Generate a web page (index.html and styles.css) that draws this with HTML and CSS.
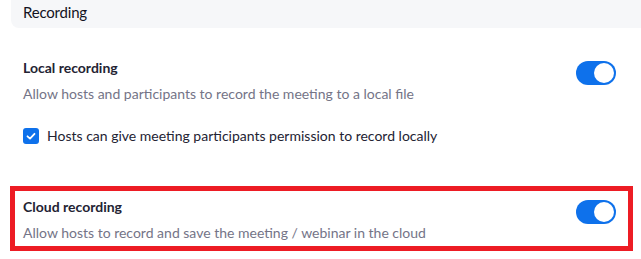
FILE: index.html
```html
<!DOCTYPE html>
<html>
<head>
<meta charset="utf-8">
<link rel="stylesheet" href="styles.css">
</head>
<body>
  <div class="section-head">Recording</div>
  <div class="setting local">
    <div class="setting-text">
      <div class="title">Local recording</div>
      <div class="desc">Allow hosts and participants to record the meeting to a local file</div>
      <label class="check">
        <span class="box">
          <svg width="16" height="16" viewBox="0 0 16 16"><path d="M4.5 8.3 L7 10.6 L11.5 5.8" fill="none" stroke="#fff" stroke-width="1.8" stroke-linecap="round" stroke-linejoin="round"/></svg>
        </span>
        <span>Hosts can give meeting participants permission to record locally</span>
      </label>
    </div>
    <span class="toggle"><span class="knob"></span></span>
  </div>
  <div class="setting cloud">
    <div class="setting-text">
      <div class="title">Cloud recording</div>
      <div class="desc">Allow hosts to record and save the meeting / webinar in the cloud</div>
    </div>
    <span class="toggle"><span class="knob"></span></span>
  </div>
</body>
</html>
```

FILE: styles.css
```css
* { box-sizing: border-box; }
body {
  margin: 0;
  background: #fff;
  font-family: Lato, "Open Sans", sans-serif;
  color: #232333;
  width: 641px;
  height: 259px;
  overflow: hidden;
}
.section-head {
  margin-left: 11px;
  height: 28px;
  background: #f6f7f9;
  border-bottom-left-radius: 8px;
  padding: 2px 0 0 12px;
  font-size: 15px;
  line-height: 20px;
  color: #131322;
  letter-spacing: -0.2px;
}
.setting {
  display: flex;
  justify-content: space-between;
  align-items: flex-start;
}
.local {
  padding: 30px 25px 0 23px;
}
.title {
  font-weight: bold;
  font-size: 14px;
  line-height: 20px;
}
.desc {
  margin-top: 6px;
  font-size: 14px;
  line-height: 20px;
  color: #747487;
}
.check {
  display: flex;
  align-items: center;
  gap: 8px;
  margin-top: 22px;
  font-size: 14px;
  line-height: 20px;
}
.box {
  width: 16px;
  height: 16px;
  border-radius: 3px;
  background: #0e71eb;
  display: flex;
}
.toggle {
  width: 40px;
  height: 24px;
  border-radius: 12px;
  background: #0e71eb;
  display: flex;
  justify-content: flex-end;
  align-items: center;
  padding-right: 2px;
  margin-top: 3px;
  flex: none;
}
.knob {
  width: 20px;
  height: 20px;
  border-radius: 50%;
  background: #fff;
}
.cloud {
  margin: 40px 0 0 10px;
  width: 623px;
  height: 65px;
  border: 5px solid #ed1c24;
  padding: 6px 12px 0 8px;
}
```
